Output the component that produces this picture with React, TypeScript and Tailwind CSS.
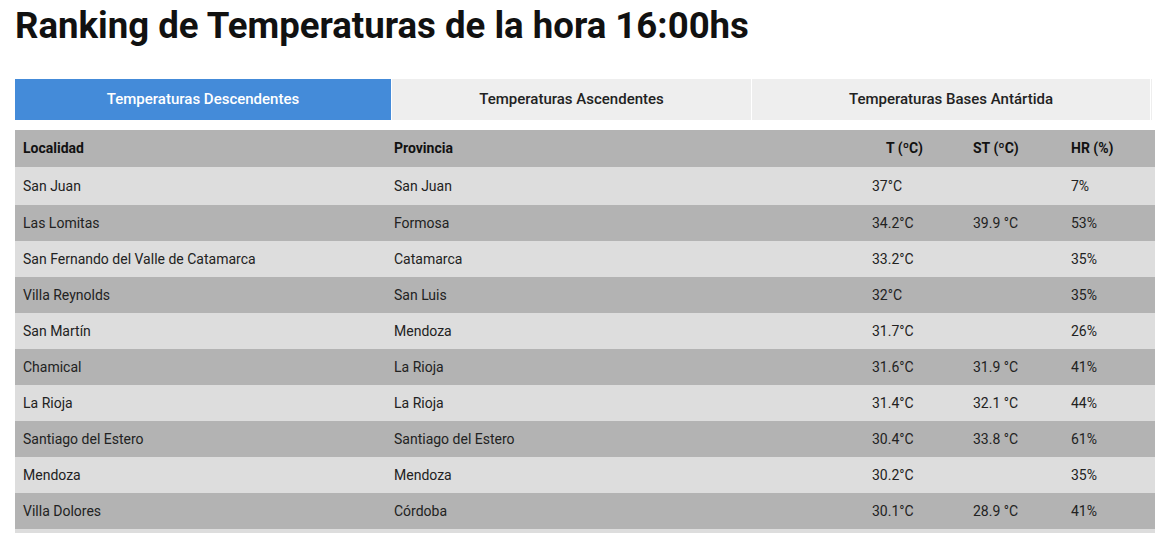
import React from "react";

const rows: [string, string, string, string, string][] = [
  ["San Juan", "San Juan", "37°C", "", "7%"],
  ["Las Lomitas", "Formosa", "34.2°C", "39.9 °C", "53%"],
  ["San Fernando del Valle de Catamarca", "Catamarca", "33.2°C", "", "35%"],
  ["Villa Reynolds", "San Luis", "32°C", "", "35%"],
  ["San Martín", "Mendoza", "31.7°C", "", "26%"],
  ["Chamical", "La Rioja", "31.6°C", "31.9 °C", "41%"],
  ["La Rioja", "La Rioja", "31.4°C", "32.1 °C", "44%"],
  ["Santiago del Estero", "Santiago del Estero", "30.4°C", "33.8 °C", "61%"],
  ["Mendoza", "Mendoza", "30.2°C", "", "35%"],
  ["Villa Dolores", "Córdoba", "30.1°C", "28.9 °C", "41%"],
  ["Jáchal", "San Juan", "30°C", "", "20%"],
  ["Valle Fértil", "San Juan", "29.8°C", "", "22%"],
];

const cols = "grid grid-cols-[371px_478px_101px_98px_92px]";

export default function App() {
  return (
    <div className="bg-white w-[1167px] h-[533px] overflow-hidden px-[15px] font-['Roboto',sans-serif]">
      <h1 className="pt-[6px] text-[36.6px] leading-[40px] font-bold text-[#111]">
        Ranking de Temperaturas de la hora 16:00hs
      </h1>
      <div className="mt-[33px] flex h-[41px] text-[15px] font-medium">
        <div className="w-[377px] bg-[#448bd9] text-white flex items-center justify-center">
          Temperaturas Descendentes
        </div>
        <div className="ml-[1px] w-[360px] bg-[#eeeeee] text-[#222] flex items-center justify-center">
          Temperaturas Ascendentes
        </div>
        <div className="ml-[1px] w-[399px] bg-[#eeeeee] text-[#222] flex items-center justify-center">
          Temperaturas Bases Antártida
        </div>
        <div className="ml-[1px] w-[1px] bg-[#eeeeee]" />
      </div>
      <div className="mt-[10px] w-[1140px] text-[14px]">
        <div className={`${cols} h-[37px] items-center bg-[#b3b3b3] font-bold text-[#111]`}>
          <div className="px-2">Localidad</div>
          <div className="px-2">Provincia</div>
          <div className="pl-[22px] pr-2">T (ºC)</div>
          <div className="px-2">ST (ºC)</div>
          <div className="px-2">HR (%)</div>
        </div>
        {rows.map((r, i) => (
          <div
            key={i}
            className={`${cols} items-center text-[#222] ${i === 0 ? "h-[38px]" : "h-[36px]"} ${
              i % 2 === 0 ? "bg-[#dddddd]" : "bg-[#b3b3b3]"
            }`}
          >
            {r.map((c, j) => (
              <div key={j} className="px-2 whitespace-nowrap">
                {c}
              </div>
            ))}
          </div>
        ))}
      </div>
    </div>
  );
}
